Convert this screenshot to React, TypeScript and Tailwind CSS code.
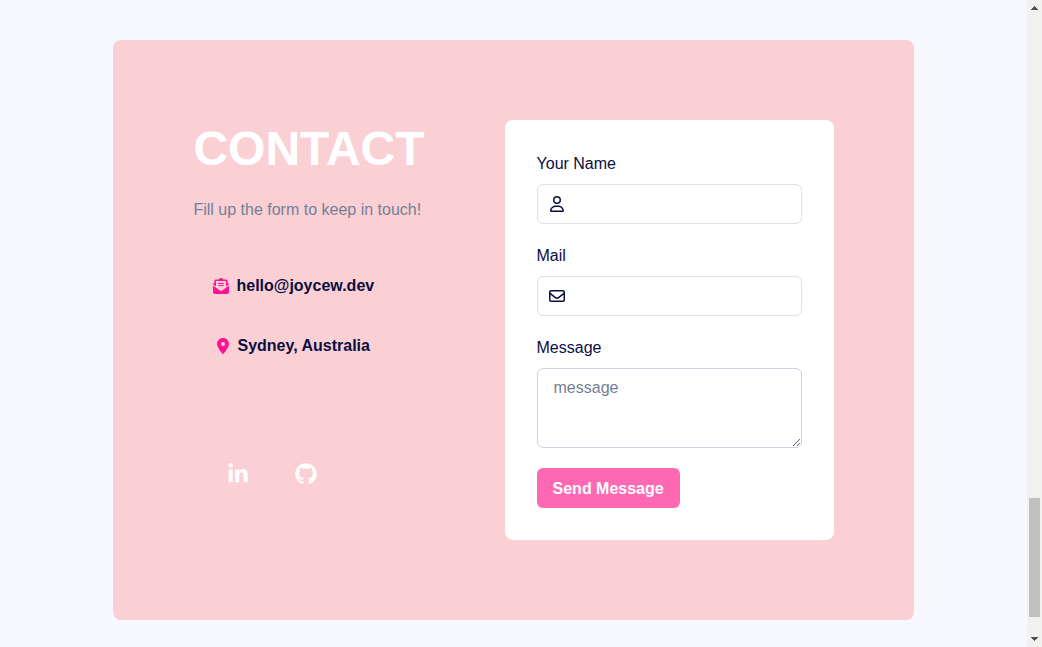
import type { ReactNode } from "react";
import {
  FaEnvelopeOpenText,
  FaGithub,
  FaLinkedinIn,
  FaLocationDot,
  FaRegEnvelope,
  FaRegUser,
} from "react-icons/fa6";

type FieldProps = {
  id: string;
  label: string;
  type: string;
  icon: ReactNode;
};

function Field({ id, label, type, icon }: FieldProps) {
  return (
    <div className="flex flex-col gap-2">
      <label htmlFor={id}>{label}</label>
      <div className="flex h-10 items-center rounded-md border border-[#e0e1e7] focus-within:border-[#3182ce]">
        <span className="flex w-[38px] shrink-0 justify-center">{icon}</span>
        <input id={id} name={id} type={type} className="h-full min-w-0 flex-1 pr-4 outline-none" />
      </div>
    </div>
  );
}

function ContactDetails() {
  return (
    <section className="flex flex-col items-start">
      <h2 className="text-5xl leading-[58px] font-bold text-white">CONTACT</h2>
      <p className="mt-5 text-[#718096]">Fill up the form to keep in touch!</p>
      <ul className="mt-11 flex flex-col gap-5 pl-5 font-bold">
        <li>
          <a href="mailto:hello@joycew.dev" className="flex h-10 items-center gap-[7px]">
            <FaEnvelopeOpenText className="text-[#ff1493]" />
            hello@joycew.dev
          </a>
        </li>
        <li>
          <a href="#location" className="flex h-10 items-center gap-2 pl-1">
            <FaLocationDot className="w-3 text-[#ff1493]" />
            Sydney, Australia
          </a>
        </li>
      </ul>
      <div className="mt-[97px] flex gap-[46px] pl-[34px] text-[22px] text-white">
        <a href="#linkedin" aria-label="LinkedIn">
          <FaLinkedinIn />
        </a>
        <a href="#github" aria-label="GitHub">
          <FaGithub />
        </a>
      </div>
    </section>
  );
}

function ContactForm() {
  return (
    <form
      className="flex w-[329px] flex-col items-stretch gap-5 rounded-lg bg-white p-8"
      onSubmit={(event) => event.preventDefault()}
    >
      <Field id="name" label="Your Name" type="text" icon={<FaRegUser />} />
      <Field id="mail" label="Mail" type="email" icon={<FaRegEnvelope />} />
      <div className="flex flex-col gap-2">
        <label htmlFor="message">Message</label>
        <textarea
          id="message"
          name="message"
          placeholder="message"
          className="block h-20 w-full resize-y rounded-md border border-[#cbd5e0] px-4 py-2 leading-[22px] outline-none placeholder:text-[#718096]"
        />
      </div>
      <button
        type="submit"
        className="h-10 self-start rounded-md bg-[#ff69b4] px-4 pt-0.5 font-bold text-white"
      >
        Send Message
      </button>
    </form>
  );
}

function ScrollRail() {
  return (
    <div aria-hidden="true" className="flex w-[15px] shrink-0 flex-col items-center bg-[#f1f1f1] py-[6px]">
      <svg width="7" height="4" viewBox="0 0 7 4" fill="#505050" shapeRendering="crispEdges">
        <path d="M3 0h1v1h1v1h1v1h1v1H0V3h1V2h1V1h1z" />
      </svg>
      <div className="flex w-full flex-1 flex-col items-center pb-[20px]">
        <div className="flex-1" />
        <div className="h-[119px] w-[11px] bg-[#c1c1c1]" />
      </div>
      <svg width="7" height="4" viewBox="0 0 7 4" fill="#505050" shapeRendering="crispEdges">
        <path d="M0 0h7v1H6v1H5v1H4v1H3V3H2V2H1V1H0z" />
      </svg>
    </div>
  );
}

export default function App() {
  return (
    <div className="flex min-h-screen bg-[#f8f9ff] font-['Liberation_Sans',Arial,sans-serif] text-base text-[#0b0e3f]">
      <main className="flex flex-1 items-start justify-center pt-10">
        <div className="flex flex-wrap items-start gap-20 rounded-lg bg-[#fad0d5] p-20">
          <ContactDetails />
          <ContactForm />
        </div>
      </main>
      <ScrollRail />
    </div>
  );
}
